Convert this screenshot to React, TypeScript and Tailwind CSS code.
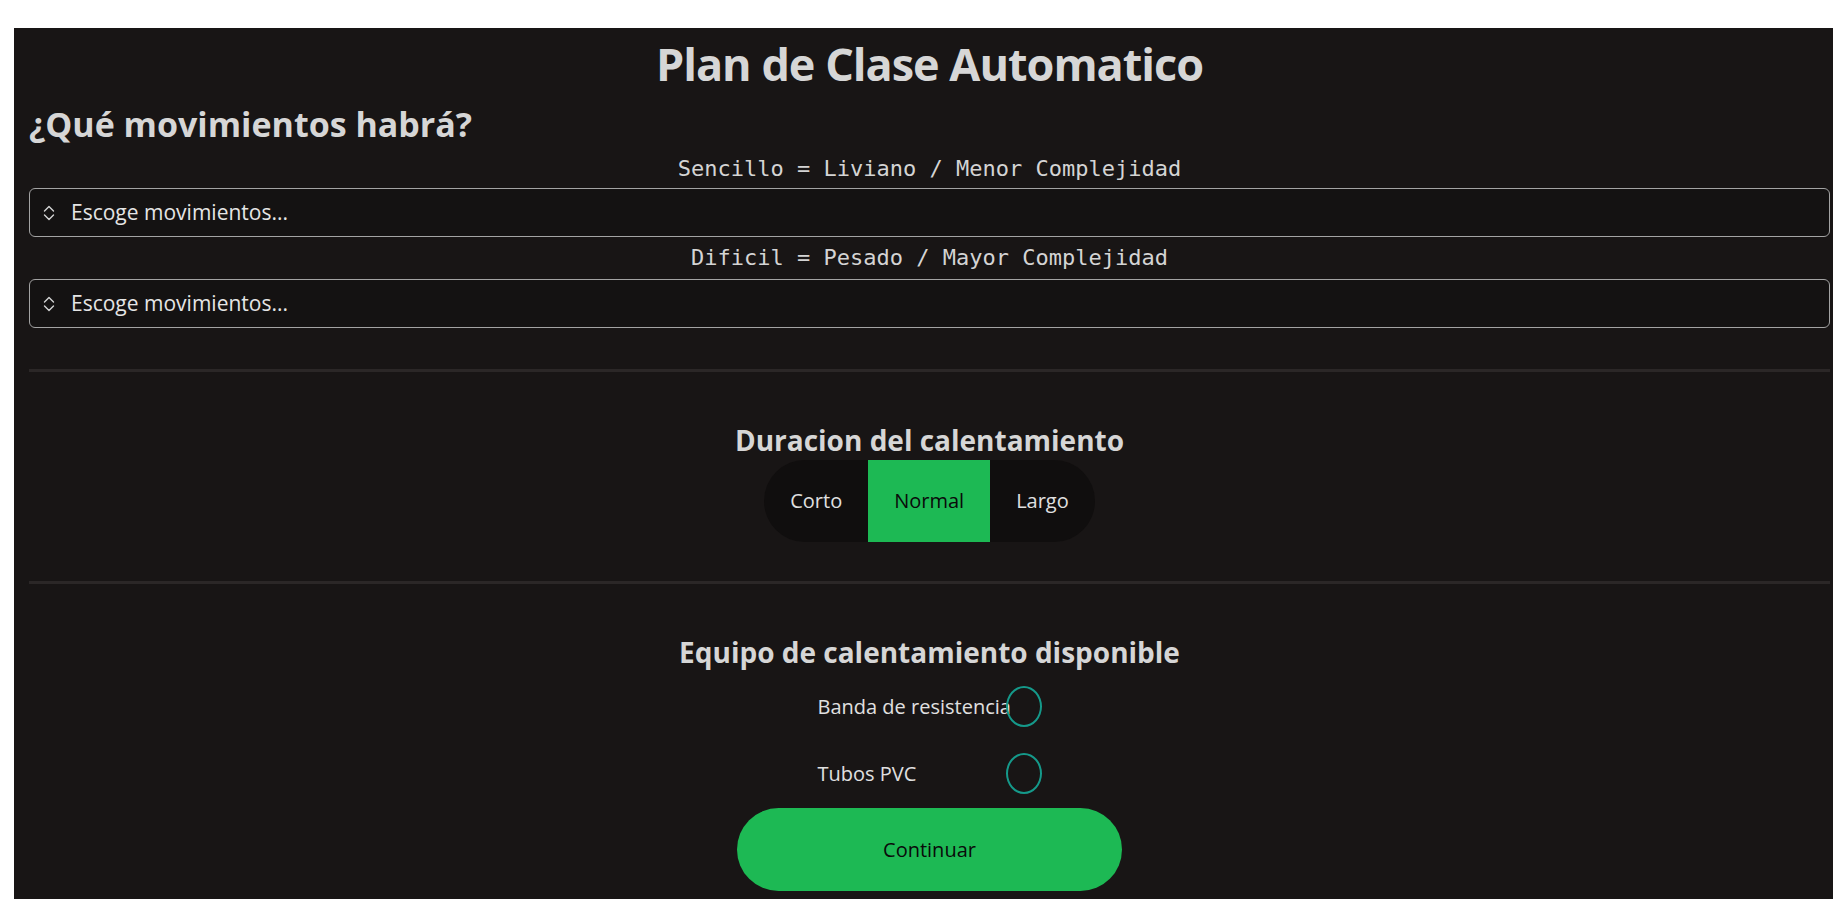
import { useState } from "react";

const sans = "font-['Open_Sans',_'Noto_Sans',_sans-serif]";
const mono = "font-['DejaVu_Sans_Mono',_'Liberation_Mono',_monospace]";

type Duration = "corto" | "normal" | "largo";

const durations: { id: Duration; label: string }[] = [
  { id: "corto", label: "Corto" },
  { id: "normal", label: "Normal" },
  { id: "largo", label: "Largo" },
];

const equipment = ["Banda de resistencia", "Tubos PVC"];

const UpDown = () => (
  <svg width="12" height="16" viewBox="0 0 12 16" fill="none" stroke="currentColor" strokeWidth="1.4" strokeLinecap="round" strokeLinejoin="round">
    <path d="M1.5 6 L6 1.5 L10.5 6" />
    <path d="M1.5 10 L6 14.5 L10.5 10" />
  </svg>
);

const MovementSelect = () => (
  <button className="flex h-[49px] w-full items-center rounded-[6px] border border-[#a3a3a3] bg-[#141212] pl-[13px] text-left text-[21px] text-[#e5e5e5]">
    <span className="text-[#d4d4d4]">
      <UpDown />
    </span>
    <span className="ml-[16px]">Escoge movimientos...</span>
  </button>
);

const Divider = ({ className = "" }: { className?: string }) => (
  <div className={`h-[3px] w-full bg-[#2b2727] ${className}`} />
);

export default function App() {
  const [duration, setDuration] = useState<Duration>("normal");
  const [gear, setGear] = useState<Record<string, boolean>>({});

  return (
    <div className={`min-h-screen bg-white pl-[14px] pt-[28px] ${sans}`}>
      <div className="min-h-[871px] bg-[#181515] pl-[15px] pr-[3px] pt-[6px]">
        <h1 className="text-center text-[45px] font-bold leading-[60px] tracking-[-1px] text-[#d6d6d6]">
          Plan de Clase Automatico
        </h1>

        <h2 className="mt-[8px] text-[34px] font-bold leading-[45px] text-[#d6d6d6]">
          ¿Qué movimientos habrá?
        </h2>

        <p className={`mt-[9px] text-center text-[22px] leading-[26px] text-[#d4d4d4] ${mono}`}>
          Sencillo = Liviano / Menor Complejidad
        </p>
        <div className="mt-[6px]">
          <MovementSelect />
        </div>

        <p className={`mt-[8px] text-center text-[22px] leading-[26px] text-[#d4d4d4] ${mono}`}>
          Dificil = Pesado / Mayor Complejidad
        </p>
        <div className="mt-[8px]">
          <MovementSelect />
        </div>

        <Divider className="mt-[41px]" />

        {/* warm-up length */}
        <h3 className="mt-[49px] text-center text-[28px] font-bold leading-[38px] text-[#d6d6d6]">
          Duracion del calentamiento
        </h3>
        <div className="mt-px flex justify-center">
          <div className="flex h-[82px] overflow-hidden rounded-full bg-[#100e0e]">
            {durations.map((d) => (
              <button
                key={d.id}
                onClick={() => setDuration(d.id)}
                className={`px-[26px] text-[20px] font-medium ${
                  duration === d.id ? "bg-[#1db954] text-[#0a0a0a]" : "text-[#e0e0e0]"
                }`}
              >
                {d.label}
              </button>
            ))}
          </div>
        </div>

        <Divider className="mt-[39px]" />

        {/* available gear */}
        <h3 className="mt-[49px] text-center text-[28px] font-bold leading-[38px] text-[#d6d6d6]">
          Equipo de calentamiento disponible
        </h3>
        <div className="mt-[15px] flex flex-col items-center gap-[26px]">
          {equipment.map((item) => (
            <label key={item} className="flex h-[41px] items-center">
              <span className="w-[188px] shrink-0 whitespace-nowrap text-[20px] text-[#e0e0e0]">{item}</span>
              <button
                onClick={() => setGear({ ...gear, [item]: !gear[item] })}
                className={`h-[41px] w-[36px] shrink-0 rounded-[50%] border-2 border-[#15998a] ${
                  gear[item] ? "bg-[#15998a]" : ""
                }`}
              />
            </label>
          ))}
        </div>

        <div className="mt-[14px] flex justify-center">
          <button className="h-[83px] w-[385px] rounded-full bg-[#1db954] text-[20px] font-medium text-[#0a0a0a]">
            Continuar
          </button>
        </div>
      </div>
    </div>
  );
}
